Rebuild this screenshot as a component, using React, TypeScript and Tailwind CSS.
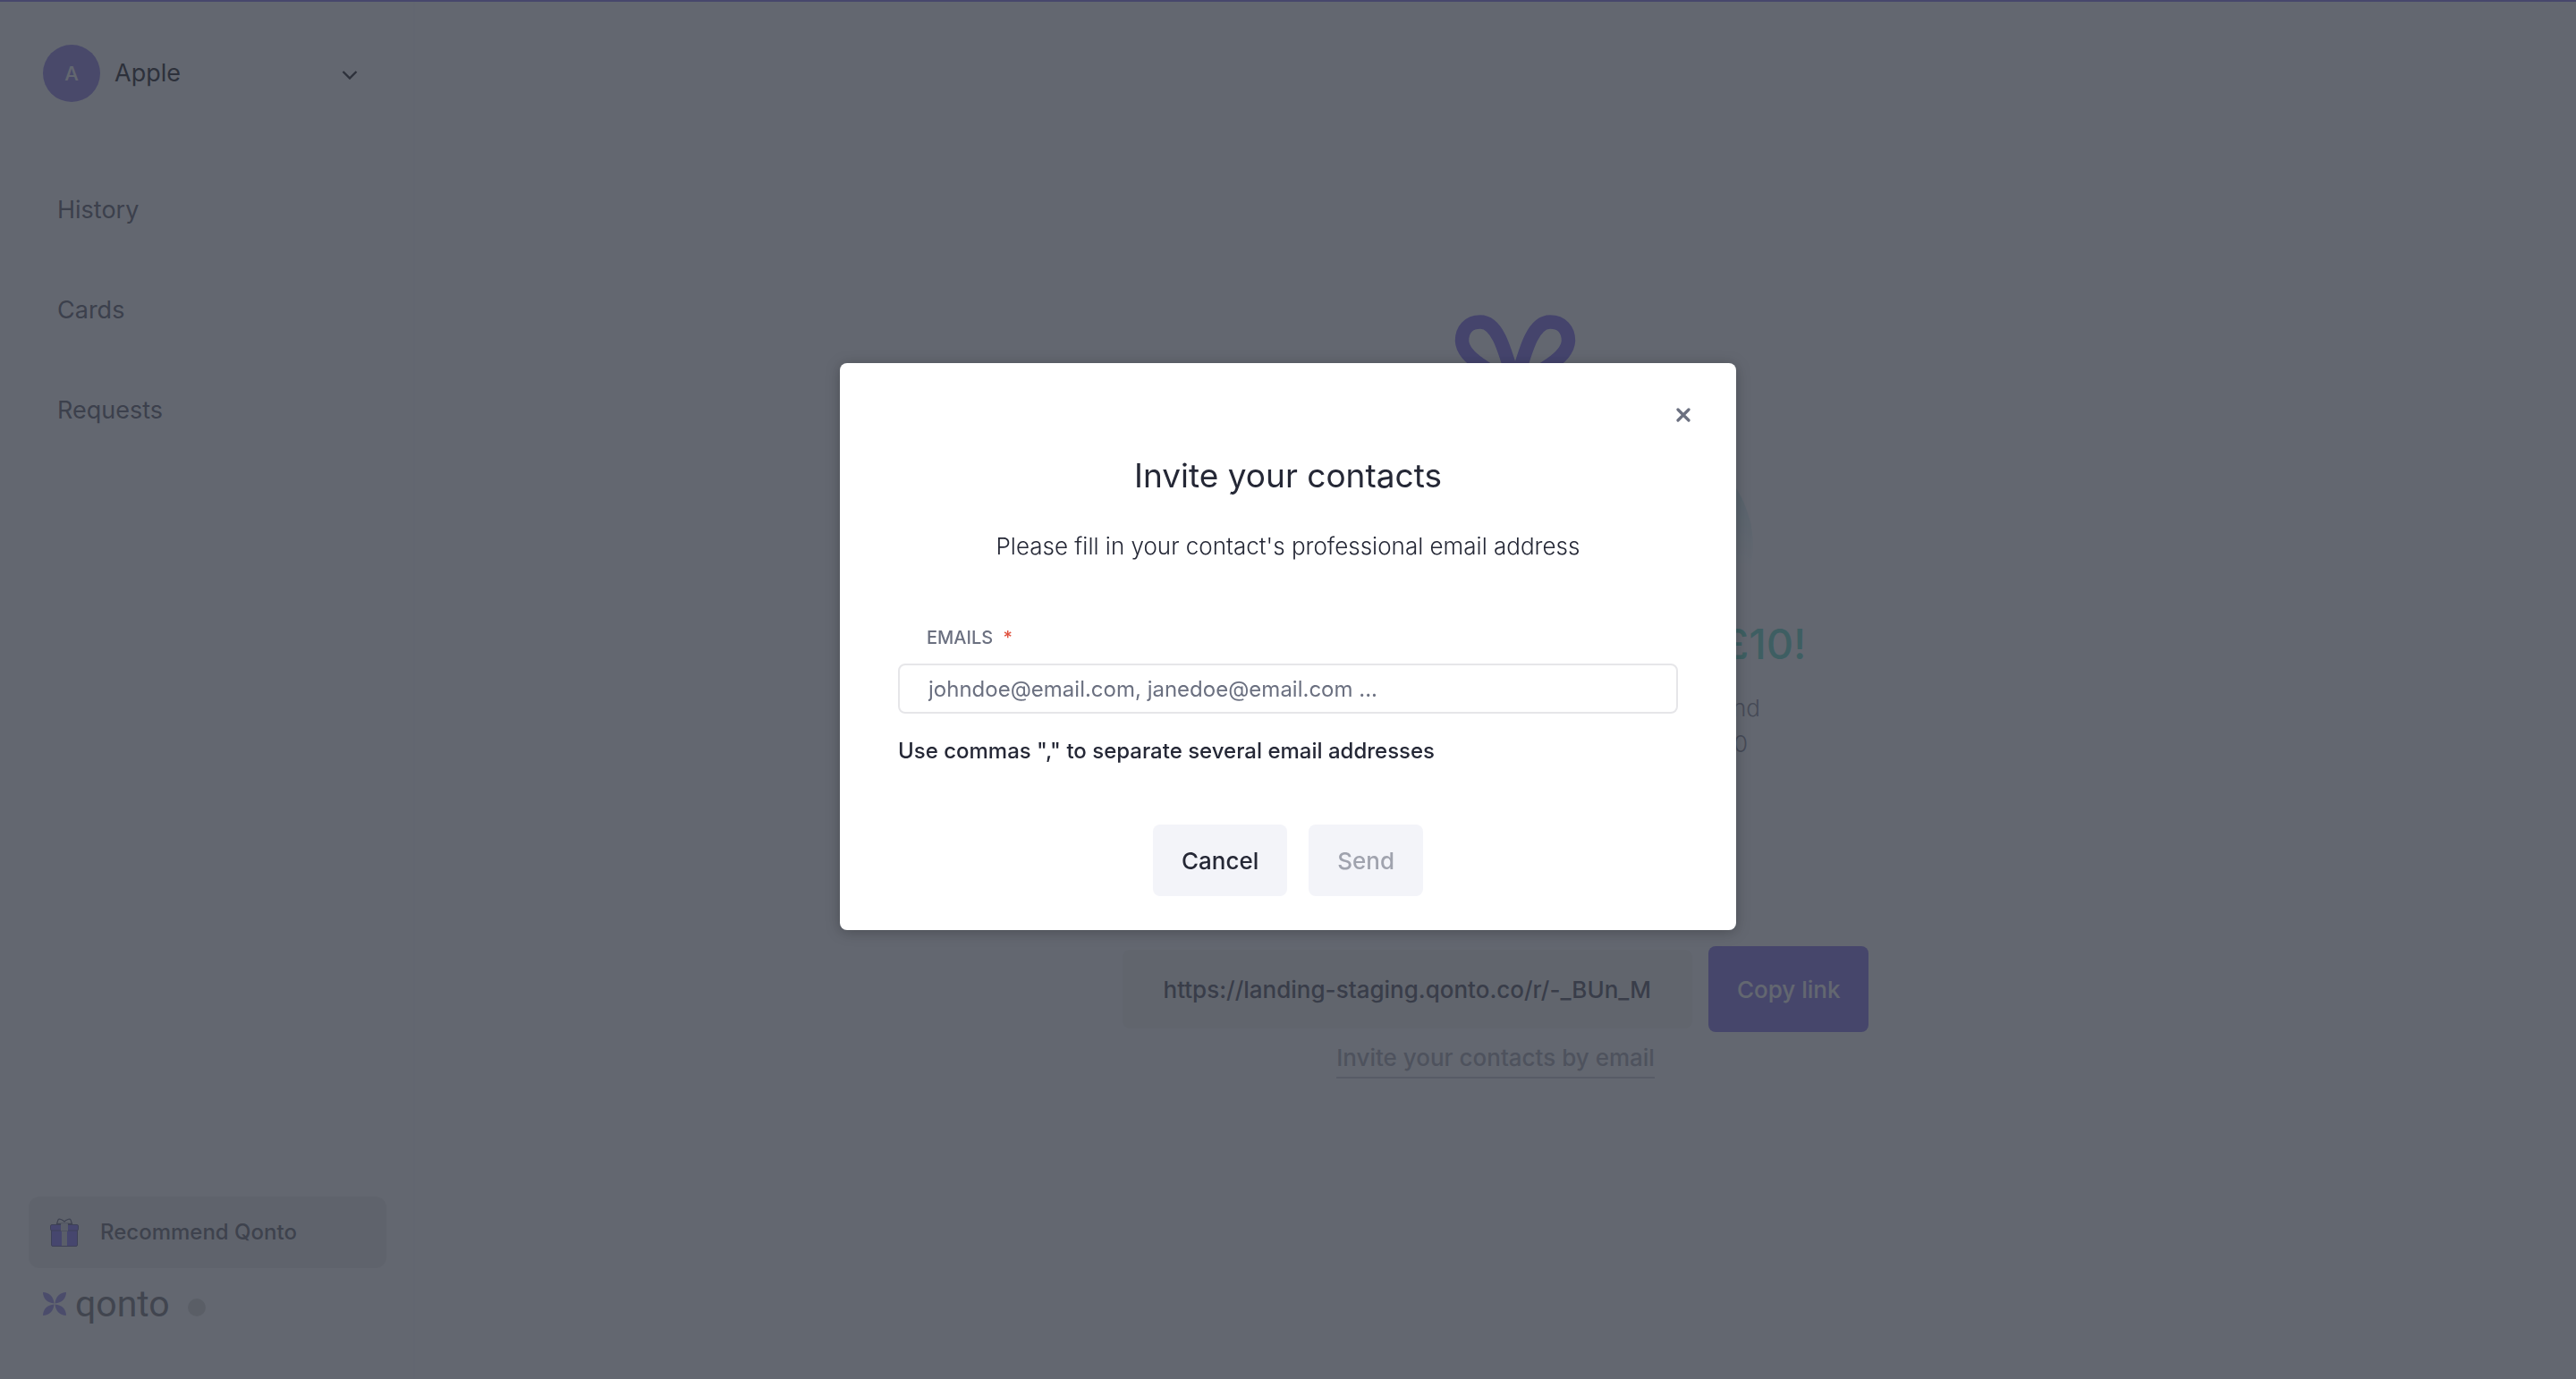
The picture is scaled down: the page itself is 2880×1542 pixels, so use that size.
import { useState } from "react";

const navItems = ["History", "Cards", "Requests"];

function GiftIcon() {
  return (
    <svg viewBox="0 0 32 32" className="w-8 h-8" fill="none">
      <path d="M16 5.5C13 7 9 6 7.5 6.5L9 2C10 0 14 2 16 4C18 2 22 0 23 2L24.5 6.5C23 6 19 7 16 5.5Z" stroke="#6b6c84" strokeWidth="1.2" />
      <rect x="1.5" y="12.5" width="29" height="19" rx="1.5" fill="#8d7cf6" stroke="#68659c" />
      <rect x="0.5" y="7.5" width="31" height="6.5" rx="1.5" fill="#8d7cf6" stroke="#68659c" />
      <path d="M12 6.5Q16 4 20 6.5V14.5H19V31H13V14.5H12Z" fill="#dcdce4" />
      <path d="M12 14.5H20" stroke="#a9a8bd" />
    </svg>
  );
}

function QontoMark() {
  return (
    <svg viewBox="0 0 26 26" className="w-[26px] h-[26px]" fill="#a095ec">
      <path d="M0 0C7 0 12 5 12.5 12.5C5 12 0 7 0 0Z" />
      <path d="M26 0C19 0 14 5 13.5 12.5C21 12 26 7 26 0Z" />
      <path d="M0 26C7 26 12 21 12.5 13.5C5 14 0 19 0 26Z" />
      <path d="M26 26C19 26 14 21 13.5 13.5C21 14 26 19 26 26Z" />
    </svg>
  );
}

function Sidebar() {
  return (
    <aside className="w-[464px] shrink-0 flex flex-col border-r-2 border-[#fbfbfd] pl-8 pr-[30px] pt-12 pb-14">
      <button type="button" className="flex items-center gap-4 px-4 text-left">
        <span className="w-16 h-16 rounded-full bg-[#9788e8] text-white text-[22px] font-medium flex items-center justify-center">
          A
        </span>
        <span className="flex-1 text-[27px] text-[#2b282c]">Apple</span>
        <svg viewBox="0 0 18 10" className="w-[18px] h-[10px] mr-4 mt-1" fill="none">
          <path d="M1.5 1L9 8.5L16.5 1" stroke="#2b282c" strokeWidth="2.4" />
        </svg>
      </button>

      <nav className="mt-[89px] flex flex-col gap-12">
        {navItems.map((item) => (
          <a key={item} href="#" className="px-8 py-3 text-[27px] leading-10 text-[#636470]">
            {item}
          </a>
        ))}
      </nav>

      <div className="mt-auto">
        <a href="#" className="flex items-center gap-6 h-20 rounded-xl bg-[#f0f0ee] px-6 text-2xl font-medium text-[#6b6c74]">
          <GiftIcon />
          Recommend Qonto
        </a>
        <div className="mt-3 flex items-center px-4">
          <QontoMark />
          <span className="ml-2.5 text-[41px] leading-[56px] text-[#77787c] font-[Roboto,sans-serif]">qonto</span>
          <span className="ml-5 mt-2 w-5 h-5 rounded-full bg-[#dbdcd8]" />
        </div>
      </div>
    </aside>
  );
}

function GiftDrawing() {
  return (
    <svg viewBox="0 0 576 320" className="w-[576px] h-80" fill="none">
      <defs>
        <linearGradient id="halo" gradientUnits="userSpaceOnUse" x1="0" y1="195" x2="0" y2="285">
          <stop offset="0" stopColor="#d4eef0" />
          <stop offset="1" stopColor="#ffffff" />
        </linearGradient>
      </defs>
      <ellipse cx="288" cy="258" rx="288" ry="180" fill="url(#halo)" />
      <rect x="199" y="100" width="222" height="180" rx="8" fill="#b7abff" />
      <g stroke="#8674f0" strokeWidth="15.5">
        <path d="M308 72C298 38 290 8 271 8C258 8 250.5 17 250.5 29C251 40 260 48 270 55C285 66 300 72 312 76" />
        <path d="M312 72C322 38 330 8 349 8C362 8 369.5 17 369.5 29C369 40 360 48 350 55C335 66 320 72 308 76" />
      </g>
    </svg>
  );
}

function ReferralPage() {
  return (
    <main className="flex-1 flex flex-col items-center pt-[350px]">
      <GiftDrawing />
      <h1 className="mt-3 text-[47px] leading-[72px] font-medium text-[#6cdcc6]">Invite your friends and get £10!</h1>
      <p className="mt-4 text-center text-[26px] leading-10 font-light text-[#8b8c98]">
        Share your link with entrepreneurs you know and
        <br />
        for every new account opened you will get £10
      </p>
      <div className="mt-[206px] flex items-center gap-[18px]">
        <span className="h-[88px] rounded-lg bg-[#f5f5f3] px-[46px] flex items-center text-[26px] font-medium text-[#575864]">
          https://landing-staging.qonto.co/r/-_BUn_M
        </span>
        <button type="button" className="h-24 rounded-lg bg-[#8b7cec] px-8 text-[26px] font-medium text-white">
          Copy link
        </button>
      </div>
      <a href="#" className="mt-2 border-b-2 border-[#cfd0d8] text-[26px] leading-[42px] font-medium text-[#abacb4]">
        Invite your contacts by email
      </a>
    </main>
  );
}

function InviteModal() {
  const [emails, setEmails] = useState("");

  return (
    <div className="fixed inset-0 flex items-start justify-center bg-[#2f3440]/75 pt-[406px]">
      <div
        role="dialog"
        aria-labelledby="invite-title"
        className="w-[1002px] rounded-lg bg-white px-[65px] pt-10 pb-[38px] flex flex-col shadow-[0_2px_16px_rgba(0,0,0,0.25)]"
      >
        <button type="button" aria-label="Close" className="self-end -mr-6 w-9 h-9 flex items-center justify-center">
          <svg viewBox="0 0 16 16" className="w-4 h-4" fill="none">
            <path d="M2 2L14 14M14 2L2 14" stroke="#6b7080" strokeWidth="3.2" strokeLinecap="round" />
          </svg>
        </button>
        <h2 id="invite-title" className="mt-6 text-center text-[37px] leading-[52px] text-[#252836]">
          Invite your contacts
        </h2>
        <p className="mt-[33px] text-center text-[26px] leading-10 font-light text-[#252836]">
          Please fill in your contact's professional email address
        </p>
        <form className="mt-[66px] flex flex-col">
          <label htmlFor="emails" className="px-8 text-xl leading-8 font-medium text-[#6b7080]">
            EMAILS <span className="ml-1.5 text-[#e0523f]">*</span>
          </label>
          <input
            id="emails"
            type="text"
            value={emails}
            onChange={(e) => setEmails(e.target.value)}
            placeholder="johndoe@email.com, janedoe@email.com ..."
            className="mt-[13px] h-14 w-full rounded-lg border-2 border-[#e6e6e9] px-8 text-2xl text-[#252836] placeholder:text-[#6b7080]"
          />
          <p className="mt-6 text-2xl leading-9 font-medium text-[#252836]">
            Use commas "," to separate several email addresses
          </p>
          <div className="mt-16 flex justify-center gap-6">
            <button type="button" className="h-20 rounded-lg bg-[#f3f4f9] px-8 text-[26px] font-medium text-[#252836]">
              Cancel
            </button>
            <button type="submit" disabled className="h-20 rounded-lg bg-[#f3f4f9] px-8 text-[26px] font-medium text-[#a0a3ae]">
              Send
            </button>
          </div>
        </form>
      </div>
    </div>
  );
}

export default function App() {
  return (
    <div className="min-h-screen flex bg-white border-t-2 border-[#9080f0] font-[Inter,sans-serif]">
      <Sidebar />
      <ReferralPage />
      <InviteModal />
    </div>
  );
}
